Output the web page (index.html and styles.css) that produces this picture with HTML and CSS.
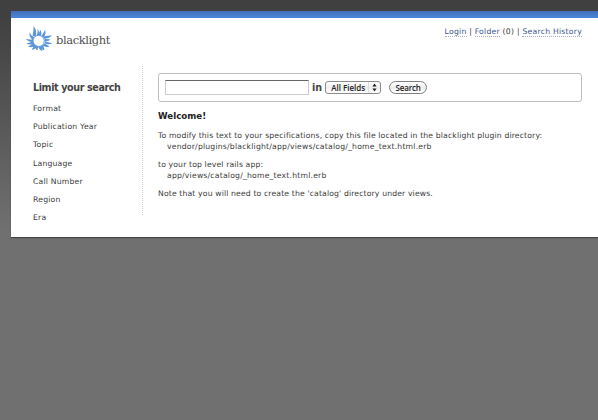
FILE: index.html
```html
<!DOCTYPE html>
<html lang="en">
<head>
<meta charset="utf-8">
<title>Blacklight</title>
<link rel="stylesheet" href="styles.css">
</head>
<body>
<div class="page">
  <header class="header">
    <a class="logo">
      <svg class="sun" viewBox="78 76 82 80" aria-hidden="true">
        <circle cx="118" cy="123" r="16.5" class="ring"/>
        <path class="rays" d="M109 111Q115 95 103 79Q103 94 100 108ZM118 108Q123 98 115 88Q116 98 112 109ZM125 108Q128 98 123 90Q119 100 119 108ZM133 112Q141 102 137 90Q131 103 125 109ZM135 117Q147 117 158 107Q143 107 130 111ZM136 124Q147 126 153 118Q143 119 135 116ZM136 130Q147 135 158 131Q147 126 135 124ZM131 137Q142 144 150 140Q142 134 135 130ZM126 138Q126 151 135 151Q133 142 132 134ZM117 140Q120 152 129 153Q126 145 126 139ZM111 138Q106 149 115 151Q114 144 119 140ZM105 134Q103 142 97 149Q108 149 114 139ZM102 129Q97 138 86 139Q98 146 108 136ZM101 123Q94 129 81 131Q95 137 104 131ZM102 118Q91 121 79 117Q90 129 102 125ZM105 112Q95 109 91 97Q89 113 101 120Z"/>
      </svg>
      <span class="wordmark">blacklight</span>
    </a>
    <nav class="user-links"><a>Login</a> | <a>Folder</a> (0) | <a>Search History</a></nav>
  </header>
  <div class="columns">
    <aside class="sidebar">
      <h2>Limit your search</h2>
      <ul>
        <li>Format</li><li>Publication Year</li><li>Topic</li><li>Language</li><li>Call Number</li><li>Region</li><li>Era</li>
      </ul>
    </aside>
    <main class="content">
      <form class="search">
        <input class="query" type="text" aria-label="Search">
        <label>in</label>
        <div class="select"><span>All Fields</span><i><svg viewBox="0 0 5 9"><path d="M2.5 0.5L4.6 3.5H.4ZM2.5 8.5L4.6 5.5H.4Z"/></svg></i></div>
        <button type="button">Search</button>
      </form>
      <h1>Welcome!</h1>
      <p class="p1">To modify this text to your specifications, copy this file located in the blacklight plugin directory:<br><span class="path">vendor/plugins/blacklight/app/views/catalog/_home_text.html.erb</span></p>
      <p class="p2">to your top level rails app:<br><span class="path">app/views/catalog/_home_text.html.erb</span></p>
      <p class="p3">Note that you will need to create the 'catalog' directory under views.</p>
    </main>
  </div>
</div>
</body>
</html>
```
FILE: styles.css
```css
* { box-sizing: border-box; }
html { background: #707070; }
body {
  margin: 0;
  height: 420px;
  overflow: hidden;
  padding: 11px 0 0 11px;
  background: linear-gradient(#404040 0, #404040 15px, #707070 232px);
  font: 7.7px/11px "DejaVu Sans", Verdana, sans-serif;
  letter-spacing: .14px;
  color: #3a3a3a;
}
.page {
  height: 226px;
  background: linear-gradient(#416fb9, #4a86da 7px, #fff 7px);
  padding-top: 7px;
  box-shadow: 0 1px 1px #444;
}
.header { display: flex; justify-content: space-between; height: 48px; padding: 7px 16px 0 14px; }
.logo { display: flex; height: 27px; }
.sun { width: 28px; height: 27px; }
.ring { fill: none; stroke: #8ab5ea; stroke-width: 3; }
.rays { fill: #5b96da; }
.wordmark { margin: 7px 0 0 3px; font: 11.5px/16px "DejaVu Serif", serif; letter-spacing: -.4px; color: #505050; }
.user-links { padding-top: 1px; white-space: pre; letter-spacing: .24px; }
.user-links a { color: #3a568f; border-bottom: 1px dotted #a5aec2; }
.columns { display: flex; padding-right: 16px; }
.sidebar { width: 132px; height: 149px; padding: 16px 0 0 22px; border-right: 1px dotted #d0d0d0; }
h1, h2, ul, p { margin: 0; padding: 0; }
h2 { font-size: 9.6px; line-height: 12px; letter-spacing: -.4px; color: #444; white-space: nowrap; }
ul { list-style: none; padding-top: 6px; letter-spacing: .2px; }
li { height: 18.2px; line-height: 18px; }
.content { flex: 1; padding: 7px 0 0 15px; }
.search {
  display: flex;
  height: 29px;
  padding: 7px 0 0 6px;
  border: 1px solid #bdbdbd;
  border-radius: 3px;
  letter-spacing: 0;
}
.query { width: 144px; height: 15px; margin: -1px 0 0; padding: 0 3px; border: 1px solid #ccc; border-top: 1px solid #666; }
.search label { margin-left: 3px; font: bold 9.6px/14px "DejaVu Sans", sans-serif; color: #444; }
.select {
  display: flex;
  width: 56px;
  height: 13px;
  margin: 0 0 0 3px;
  padding-left: 5px;
  border: 1px solid #8c8c8c;
  border-radius: 3px;
  background: linear-gradient(#fff, #eee 50%, #fff);
  font: 8px/11px "Open Sans", sans-serif;
  color: #222;
  white-space: nowrap;
  font-weight: 600;
}
.select span { width: 37px; }
.select i { width: 12px; height: 11px; padding: 1px 0 0 3px; border-left: 1px solid #ddd; }
.select svg { display: block; width: 5px; height: 9px; fill: #222; }
button {
  width: 38px;
  height: 13px;
  margin: 0 0 0 8px;
  padding: 0;
  border: 1px solid #808080;
  border-radius: 7px;
  background: linear-gradient(#fff, #eee 50%, #fff);
  font: 600 8px/11px "Open Sans", sans-serif;
  letter-spacing: -.15px;
  color: #222;
}
h1 { margin-top: 8px; font-size: 8.7px; line-height: 12px; letter-spacing: 0; color: #222; }
p { white-space: nowrap; }
.p1 { margin-top: 8px; }
.p2, .p3 { margin-top: 7px; }
.path { margin-left: 9px; letter-spacing: .2px; }
```
